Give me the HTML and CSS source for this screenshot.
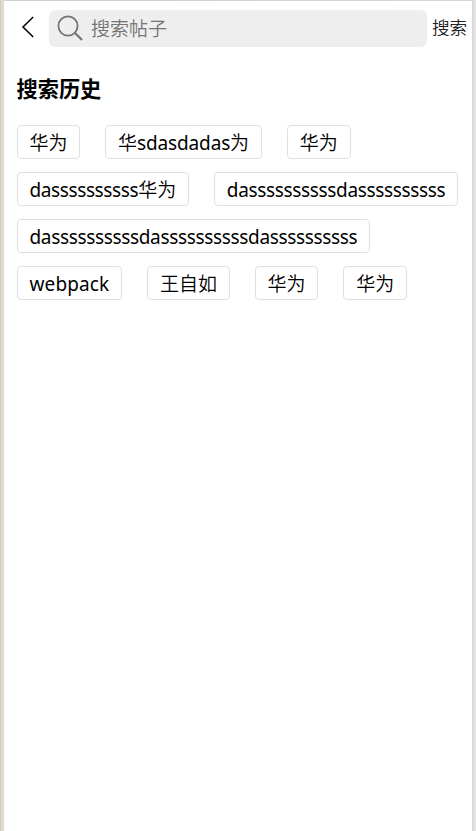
FILE: index.html
```html
<!DOCTYPE html>
<html lang="zh-CN">
<head>
<meta charset="utf-8">
<title>搜索</title>
<link rel="stylesheet" href="styles.css">
</head>
<body>
<main class="page">
  <header class="bar">
    <svg class="back" viewBox="0 0 14 22" width="14" height="22"><path d="M12.2 1 2 11l10.2 10" fill="none" stroke="#000" stroke-width="1.5"/></svg>
    <div class="field">
      <svg class="glass" viewBox="0 0 26 26" width="26" height="26" fill="none" stroke="#757575"><circle cx="11" cy="11" r="9.6" stroke-width="1.8"/><path d="M17.8 17.8 25 25" stroke-width="2.2"/></svg>
      <span class="hint">搜索帖子</span>
    </div>
    <span class="submit">搜索</span>
  </header>
  <h1 class="title">搜索历史</h1>
  <div class="tags">
    <span class="tag">华为</span>
    <span class="tag">华<span class="latin mixed">sdasdadas</span>为</span>
    <span class="tag">华为</span>
    <span class="tag"><span class="latin">dassssssssss</span>华为</span>
    <span class="tag"><span class="latin long">dassssssssssdassssssssss</span></span>
    <span class="tag"><span class="latin long">dassssssssssdassssssssssdassssssssss</span></span>
    <span class="tag"><span class="latin word">webpack</span></span>
    <span class="tag">王自如</span>
    <span class="tag">华为</span>
    <span class="tag">华为</span>
  </div>
</main>
</body>
</html>
```
FILE: styles.css
```css
* { box-sizing: border-box; }
body {
  margin: 0;
  height: 831px;
  overflow: hidden;
  padding: 1px 4px 0;
  background: linear-gradient(90deg, #dfcb9f 0, #dfcb9f 1px, #d9d9d9 1px, #dcdcdc 4px, #d0d0d0 4px, #d6d6d6 472px, #e8e8e8 476px);
  font-family: "Noto Sans", "Noto Sans CJK SC", sans-serif;
  color: #000;
}
.page { height: 830px; background: #fff; }
.bar { display: flex; align-items: center; height: 55px; }
.back { margin: -4px 0 0 17px; }
.field {
  display: flex;
  align-items: center;
  width: 378px;
  height: 37px;
  margin-left: 14px;
  padding-left: 8px;
  border-radius: 6px;
  background: #eee;
}
.hint { margin: -1px 0 0 8px; font: 350 19px/36px "Noto Sans CJK SC", sans-serif; color: #757575; }
.submit { margin: -4px 0 0 5px; font: 350 17.6px/26px "Noto Sans CJK SC", sans-serif; color: #222; }
.glass { margin-top: -1px; }
.title { margin: 16px 0 0 12.5px; font: 700 21.2px/32px "Noto Sans CJK SC", sans-serif; }
.tags { display: flex; flex-wrap: wrap; gap: 12.5px 25px; margin: 20.5px 0 0 12.7px; }
.tag {
  height: 34.5px;
  padding: 0 11.8px;
  border: 1px solid #dfe0e6;
  border-radius: 4px;
  font: 350 19px/32px "Noto Sans CJK SC", sans-serif;
  white-space: nowrap;
}
.latin { font-family: "Noto Sans", sans-serif; font-weight: 400; letter-spacing: -0.39px; }
.long { letter-spacing: -0.34px; }
.mixed { letter-spacing: -0.15px; }
.word { letter-spacing: 0.13px; }
```
